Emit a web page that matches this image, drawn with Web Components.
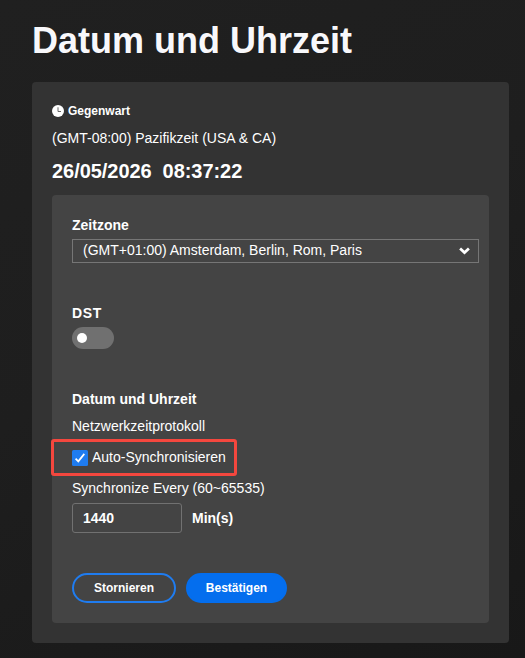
<!DOCTYPE html>
<html lang="de">
<head>
<meta charset="utf-8">
<title>Datum und Uhrzeit</title>
<style>
html, body { margin: 0; height: 100%; }
body { background: linear-gradient(150deg, #202020 0%, #1e1e1e 45%, #181818 100%); color: #fff; font-family: "Liberation Sans", Arial, sans-serif; font-size: 14px; overflow: hidden; }
</style>
</head>
<body>
<date-time-page></date-time-page>
<script>
const define = (name, html) => {
  const template = document.createElement('template');
  template.innerHTML = html.trim();
  customElements.define(name, class extends HTMLElement {
    constructor() {
      super();
      this.attachShadow({ mode: 'open' }).append(template.content.cloneNode(true));
    }
  });
};

define('panel-box', `
<style>
:host { display: block; box-sizing: border-box; border-radius: 4px; background: var(--panel, #333); padding: var(--pad, 20px); }
</style><slot></slot>`);

define('text-line', `
<style>
:host { display: block; line-height: 16px; white-space: nowrap; }
:host([bold]) { font-weight: 700; }
</style><slot></slot>`);

define('clock-status', `
<style>
:host { display: flex; flex-direction: column; box-sizing: border-box; height: 93px; padding-top: 2px; white-space: pre; }
.now { display: flex; align-items: center; gap: 4px; font-weight: 700; font-size: 12px; line-height: 14px; }
svg { display: block; width: 12px; height: 12px; }
.zone { line-height: 16px; margin-top: 12px; }
.time { font-size: 20px; font-weight: 700; line-height: 24px; margin-top: 13px; letter-spacing: -.05px; }
</style>
<div class="now"><svg viewBox="0 0 12 12"><circle cx="6" cy="6" r="6" fill="#fff"/><path d="M6 2.3V6.5H9" fill="none" stroke="#666" stroke-width="1"/></svg><span><slot name="label"></slot></span></div>
<div class="zone"><slot name="zone"></slot></div>
<div class="time"><slot name="time"></slot></div>`);

define('select-box', `
<style>
:host { display: flex; align-items: center; justify-content: space-between; box-sizing: border-box; height: 24px; border: 1px solid #767676; padding: 0 8px 2px 10px; }
svg { display: block; width: 11px; height: 8px; margin-top: 2px; }
</style>
<span><slot></slot></span>
<svg viewBox="0 0 11 8"><path d="M1.1 1.5L5.5 5.6L9.9 1.5" fill="none" stroke="#fff" stroke-width="2.7"/></svg>`);

define('toggle-switch', `
<style>
:host { display: flex; align-items: center; box-sizing: border-box; width: 42px; height: 22px; border-radius: 11px; background: #707070; padding: 0 5px; }
i { width: 10px; height: 10px; border-radius: 50%; background: #fff; }
</style><i></i>`);

define('check-option', `
<style>
:host { display: flex; align-items: center; gap: 4px; box-sizing: border-box; width: 186px; height: 37px; border: 3px solid #f4473e; border-radius: 3px; padding-left: 18px; }
svg { display: block; width: 16px; height: 16px; }
span { line-height: 16px; padding-bottom: 1px; }
</style>
<svg viewBox="0 0 16 16"><rect width="16" height="16" rx="1.5" fill="#1f7cf0"/><path d="M3.6 8.6L6.3 11.4L12.3 3.9" fill="none" stroke="#fff" stroke-width="1.7"/></svg>
<span><slot></slot></span>`);

define('number-field', `
<style>
:host { display: flex; align-items: center; gap: 10px; font-weight: 700; }
div { box-sizing: border-box; width: 110px; height: 30px; border: 1px solid #717171; border-radius: 3px; padding-left: 10px; line-height: 28px; }
</style>
<div><slot></slot></div><span><slot name="unit"></slot></span>`);

define('pill-button', `
<style>
:host { display: flex; align-items: center; justify-content: center; box-sizing: border-box; height: 30px; width: 104px; border: 2px solid #1f7cf0; border-radius: 15px; font-size: 12px; font-weight: 700; }
:host([primary]) { width: 101px; background: #046eee; border-color: #046eee; }
</style><slot></slot>`);

define('date-time-page', `
<style>
:host { display: block; padding: 20px 16px 15px 32px; }
h1 { margin: 0 0 20px; font-size: 36px; line-height: 42px; font-weight: 700; color: #f8f8fb; }
.outer { --panel: #333; height: 561px; }
.inner { --panel: #444; --pad: 22px 10px 20px 20px; height: 428px; }
select-box { margin-top: 6px; }
.dst { margin-top: 42px; letter-spacing: .6px; }
toggle-switch { margin-top: 6px; }
.date { margin-top: 42px; }
.ntp { margin-top: 11px; }
check-option { margin: 5px 0 4px -21px; }
number-field { margin-top: 7px; }
footer { display: flex; gap: 10px; margin-top: 40px; }
</style>
<h1>Datum und Uhrzeit</h1>
<panel-box class="outer">
  <clock-status><span slot="label">Gegenwart</span><span slot="zone">(GMT-08:00) Pazifikzeit (USA &amp; CA)</span><span slot="time">26/05/2026  08:37:22</span></clock-status>
  <panel-box class="inner">
    <text-line bold>Zeitzone</text-line>
    <select-box>(GMT+01:00) Amsterdam, Berlin, Rom, Paris</select-box>
    <text-line bold class="dst">DST</text-line>
    <toggle-switch></toggle-switch>
    <text-line bold class="date">Datum und Uhrzeit</text-line>
    <text-line class="ntp">Netzwerkzeitprotokoll</text-line>
    <check-option>Auto-Synchronisieren</check-option>
    <text-line>Synchronize Every (60~65535)</text-line>
    <number-field>1440<span slot="unit">Min(s)</span></number-field>
    <footer><pill-button>Stornieren</pill-button><pill-button primary>Bestätigen</pill-button></footer>
  </panel-box>
</panel-box>`);
</script>
</body>
</html>
